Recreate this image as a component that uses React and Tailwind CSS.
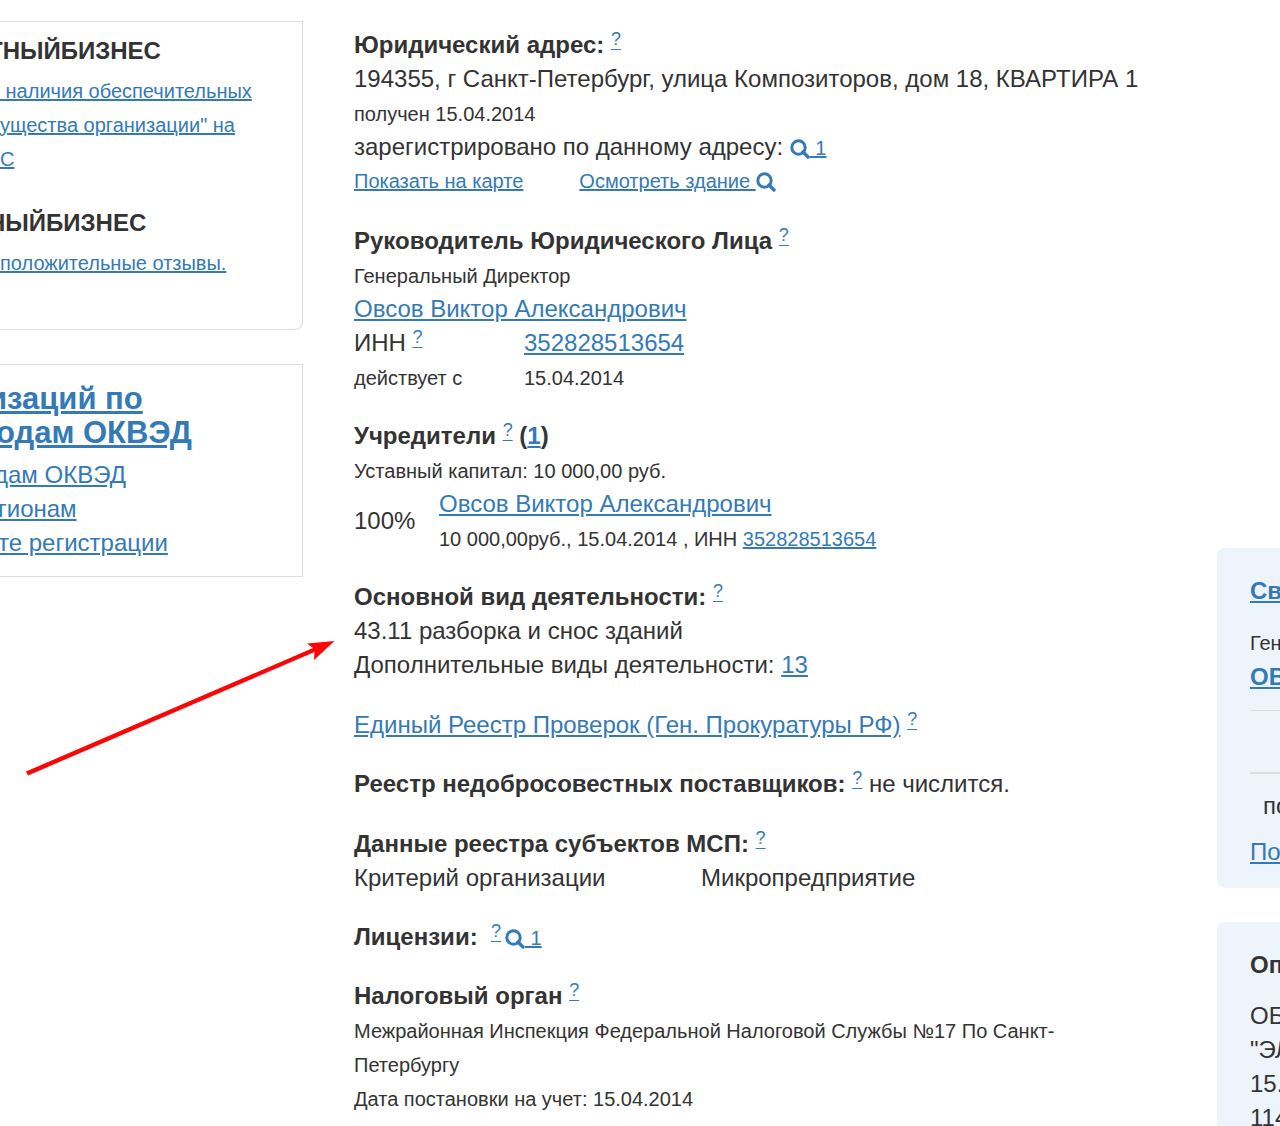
const linkColor = "text-[#337ab7] underline";

function A({ children, className = "" }) {
  return (
    <a href="#" className={`${linkColor} ${className}`}>
      {children}
    </a>
  );
}

function Help() {
  return (
    <sup className="relative -top-2 align-baseline text-lg leading-none font-normal">
      <A className="underline-offset-4">?</A>
    </sup>
  );
}

function SearchIcon() {
  return (
    <svg
      viewBox="0 0 20 20"
      className="inline-block size-5 align-[-4px]"
      fill="none"
      stroke="#337ab7"
      aria-hidden="true"
    >
      <circle cx="8.500" cy="8.500" r="6.700" strokeWidth="3" />
      <path d="M13 13L18 18" strokeWidth="3.400" strokeLinecap="round" />
    </svg>
  );
}

function Section({ title, after, children, className = "mt-[25px]" }) {
  return (
    <section className={className}>
      <h2 className="font-bold">
        {title} <Help />
        {after}
      </h2>
      {children}
    </section>
  );
}

function Small({ children }) {
  return (
    <p>
      <span className="text-xl leading-none">{children}</span>
    </p>
  );
}

function LeftColumn() {
  return (
    <aside className="w-[303px] shrink-0 overflow-hidden pt-[21px] whitespace-nowrap">
      <div className="h-[309px] rounded-br-lg border border-l-0 border-[#dddddd] pt-3">
        <h2 className="-ml-3 font-bold">ТНЫЙБИЗНЕС</h2>
        <p className="mt-1.5 text-xl leading-[34px]">
          <A>
            &nbsp;наличия обеспечительных
            <br />
            ущества организации" на
            <br />С
          </A>
        </p>
        <h2 className="mt-[30px] -ml-3 font-bold">НЫЙБИЗНЕС</h2>
        <p className="mt-1.5 text-xl leading-[34px]">
          <A>положительные отзывы.</A>
        </p>
      </div>
      <div className="mt-[34px] h-[213px] border border-l-0 border-[#dddddd] pt-[17px]">
        <h2 className="-ml-1 -indent-2 text-[31px] leading-[34px] font-bold">
          <A>
            изаций по
            <br />
            одам ОКВЭД
          </A>
        </h2>
        <ul className="mt-2 -ml-0.5">
          <li className="-ml-1"><A>дам ОКВЭД</A></li>
          <li><A>гионам</A></li>
          <li><A>те регистрации</A></li>
        </ul>
      </div>
    </aside>
  );
}

function RightColumn() {
  return (
    <aside className="w-[63px] shrink-0 overflow-hidden pt-[548px] whitespace-nowrap">
      <div className="h-[340px] rounded-l-lg bg-[#edf4fc] pt-[26px] pl-[33px]">
        <h2 className="font-bold"><A>Св</A></h2>
        <p className="mt-[18px] text-xl leading-[34px]">Ген</p>
        <p className="font-bold"><A>ОВ</A></p>
        <hr className="mt-4 border-[#dddddd]" />
        <hr className="mt-[61px] border-t-2 border-[#dddddd]" />
        <p className="mt-[15px] pl-[13px]">по</p>
        <p className="mt-3"><A>По</A></p>
      </div>
      <div className="mt-[34px] h-[240px] rounded-l-lg bg-[#edf4fc] pt-[26px] pl-[33px]">
        <h2 className="font-bold">Оп</h2>
        <p className="mt-[17px]">
          ОБ
          <br />
          "ЭЛ
          <br />
          15.
          <br />
          114
        </p>
      </div>
    </aside>
  );
}

function Arrow() {
  return (
    <svg
      viewBox="0 0 310 140"
      className="absolute top-[638px] left-[26px] w-[310px]"
      fill="#fb0505"
      aria-hidden="true"
    >
      <path d="M0 133.500L287 10L281 5.500L308.500 3L288 22L288.500 14L2 137.500Z" />
    </svg>
  );
}

export default function App() {
  return (
    <div className="relative flex h-screen overflow-hidden bg-white font-['Liberation_Sans',Arial,sans-serif] text-2xl leading-[34px] text-[#333333]">
      <LeftColumn />
      <main className="min-w-0 flex-1 pt-7 pl-[51px]">
        <Section title="Юридический адрес:" className="">
          <p>194355, г Санкт-Петербург, улица Композиторов, дом 18, КВАРТИРА 1</p>
          <Small>получен 15.04.2014</Small>
          <p>
            зарегистрировано по данному адресу:{" "}
            <a href="#" className="text-xl leading-none text-[#337ab7]">
              <SearchIcon />
              <span className="underline">&nbsp;1</span>
            </a>
          </p>
          <div className="flex gap-14 text-xl leading-[34px]">
            <A>Показать на карте</A>
            <a href="#" className="text-[#337ab7]">
              <span className="underline">Осмотреть здание&nbsp;</span>
              <SearchIcon />
            </a>
          </div>
        </Section>

        <Section title="Руководитель Юридического Лица" className="mt-[26px]">
          <Small>Генеральный Директор</Small>
          <p><A>Овсов Виктор Александрович</A></p>
          <dl className="grid grid-cols-[170px_1fr]">
            <dt>ИНН <Help /></dt>
            <dd><A>352828513654</A></dd>
            <dt><span className="text-xl leading-none">действует с</span></dt>
            <dd><span className="text-xl leading-none">15.04.2014</span></dd>
          </dl>
        </Section>

        <Section title="Учредители" after={<> (<A>1</A>)</>}>
          <Small>Уставный капитал: 10 000,00 руб.</Small>
          <div className="grid grid-cols-[85px_1fr] items-center">
            <p>100%</p>
            <div>
              <p><A>Овсов Виктор Александрович</A></p>
              <Small>10 000,00руб., 15.04.2014 , ИНН <A>352828513654</A></Small>
            </div>
          </div>
        </Section>

        <Section title="Основной вид деятельности:">
          <p>43.11 разборка и снос зданий</p>
          <p>Дополнительные виды деятельности: <A>13</A></p>
        </Section>

        <p className="mt-[26px]">
          <A>Единый Реестр Проверок (Ген. Прокуратуры РФ)</A> <Help />
        </p>

        <Section
          title="Реестр недобросовестных поставщиков:"
          after={<span className="font-normal"> не числится.</span>}
        />

        <Section title="Данные реестра субъектов МСП:" className="mt-[26px]">
          <dl className="grid grid-cols-[347px_1fr]">
            <dt>Критерий организации</dt>
            <dd>Микропредприятие</dd>
          </dl>
        </Section>

        <Section
          title={<>Лицензии:&nbsp;</>}
          after={
            <a href="#" className="ml-1 text-xl leading-none font-normal text-[#337ab7]">
              <SearchIcon />
              <span className="underline">&nbsp;1</span>
            </a>
          }
        />

        <Section title="Налоговый орган">
          <Small>
            Межрайонная Инспекция Федеральной Налоговой Службы №17 По Санкт-
            <br />
            Петербургу
          </Small>
          <Small>Дата постановки на учет: 15.04.2014</Small>
        </Section>
      </main>
      <RightColumn />
      <Arrow />
    </div>
  );
}
